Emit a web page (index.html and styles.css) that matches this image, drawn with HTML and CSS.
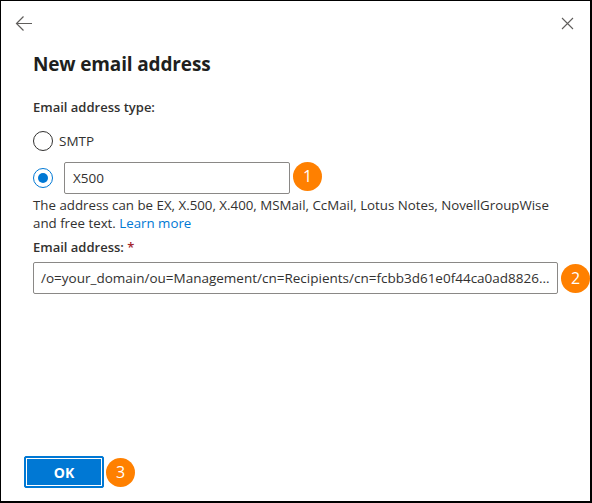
FILE: index.html
```html
<!DOCTYPE html>
<html lang="en">

<head>
    <meta charset="UTF-8">
    <meta name="viewport" content="width=device-width, initial-scale=1.0">
    <title>New email address</title>
    <link rel="stylesheet" href="styles.css">
</head>

<body>
    <div class="dialog">
        <div class="dialog-top">
            <button class="icon-btn" type="button" aria-label="Back">
                <svg width="18" height="17" viewBox="0 0 18 17">
                    <path d="M17 8.5H2M8.5 1.5L1.5 8.5L8.5 15.5" fill="none" stroke="#605e5c" stroke-width="1.2" />
                </svg>
            </button>
            <button class="icon-btn" type="button" aria-label="Close">
                <svg width="13" height="13" viewBox="0 0 13 13">
                    <path d="M1 1L12 12M12 1L1 12" fill="none" stroke="#605e5c" stroke-width="1.1" />
                </svg>
            </button>
        </div>

        <h1 class="title">New email address</h1>

        <div class="content">
            <div class="field-label">Email address type:</div>

            <div class="choices">
                <label class="choice">
                    <span class="radio"></span>
                    <span class="choice-text">SMTP</span>
                </label>
                <label class="choice">
                    <span class="radio checked"></span>
                    <span class="text-box short">X500</span>
                    <span class="badge">1</span>
                </label>
            </div>

            <p class="hint">The address can be EX, X.500, X.400, MSMail, CcMail, Lotus Notes, NovellGroupWise and free text. <a href="#">Learn more</a></p>

            <div class="field-label address-label">Email address: <span class="req">*</span></div>
            <div class="field-row">
                <div class="text-box wide">/o=your_domain/ou=Management/cn=Recipients/cn=fcbb3d61e0f44ca0ad8826...</div>
                <span class="badge">2</span>
            </div>
        </div>

        <div class="footer">
            <button class="ok-btn" type="button">OK</button>
            <span class="badge">3</span>
        </div>
    </div>
</body>

</html>
```

FILE: styles.css
```css
/* General Reset */
* {
    margin: 0;
    padding: 0;
    box-sizing: border-box;
    font-family: 'Open Sans', 'Noto Sans', sans-serif;
}

body {
    background: #fff;
    color: #323130;
}

/* Dialog frame */
.dialog {
    width: 592px;
    height: 503px;
    border: 1px solid #000;
    border-right-width: 2px;
    border-bottom-width: 2px;
    display: flex;
    flex-direction: column;
    overflow: hidden;
    background: #fff;
}

.dialog-top {
    height: 49px;
    display: flex;
    justify-content: space-between;
    align-items: center;
    padding: 0 16px 4px 14px;
}

.icon-btn {
    background: none;
    border: none;
    display: flex;
    align-items: center;
    justify-content: center;
    cursor: pointer;
}

.title {
    font-size: 19px;
    line-height: 28px;
    font-weight: 700;
    color: #201f1e;
    padding-left: 32px;
    letter-spacing: -0.15px;
}

.content {
    padding: 19px 0 0 32px;
}

.field-label {
    font-size: 13px;
    line-height: 20px;
    font-weight: 600;
    color: #323130;
}

.address-label {
    margin-top: 5px;
}

.req {
    color: #a4262c;
}

/* Radio choices */
.choices {
    margin-top: 8px;
    display: flex;
    flex-direction: column;
    gap: 5px;
}

.choice {
    height: 32px;
    display: flex;
    align-items: center;
    font-size: 13.5px;
}

.radio {
    width: 20px;
    height: 20px;
    border: 1px solid #323130;
    border-radius: 50%;
    flex-shrink: 0;
    display: flex;
    align-items: center;
    justify-content: center;
}

.radio.checked {
    border-color: #0078d4;
}

.radio.checked::after {
    content: "";
    width: 10px;
    height: 10px;
    border-radius: 50%;
    background: #0078d4;
}

.choice-text {
    margin-left: 6px;
}

.text-box {
    height: 32px;
    border: 1px solid #8a8886;
    border-radius: 2px;
    display: flex;
    align-items: center;
    font-size: 13.5px;
    color: #323130;
    white-space: nowrap;
    overflow: hidden;
}

.text-box.short {
    width: 226px;
    margin-left: 11px;
    padding-left: 8px;
}

.text-box.wide {
    width: 527px;
    padding-left: 7px;
}

.hint {
    margin-top: 2px;
    font-size: 13.3px;
    line-height: 18px;
    width: 530px;
}

.hint a {
    color: #0078d4;
    text-decoration: none;
}

.field-row {
    margin-top: 5px;
    display: flex;
    align-items: center;
}

/* Numbered callouts */
.badge {
    width: 29px;
    height: 29px;
    border-radius: 50%;
    background: #ff8000;
    color: #fff;
    font-size: 16px;
    display: flex;
    align-items: center;
    justify-content: center;
    margin-left: 3px;
    flex-shrink: 0;
}

.choice .badge {
    margin-top: -4px;
}

/* Footer */
.footer {
    margin-top: auto;
    padding: 0 0 13px 23px;
    display: flex;
    align-items: center;
}

.ok-btn {
    width: 80px;
    height: 32px;
    background: #0078d4;
    border: 1px solid #0078d4;
    border-radius: 2px;
    outline: 1px solid #fff;
    outline-offset: -3px;
    color: #fff;
    font-size: 14px;
    font-weight: 700;
}

.footer .badge {
    margin-left: 2px;
}
```
